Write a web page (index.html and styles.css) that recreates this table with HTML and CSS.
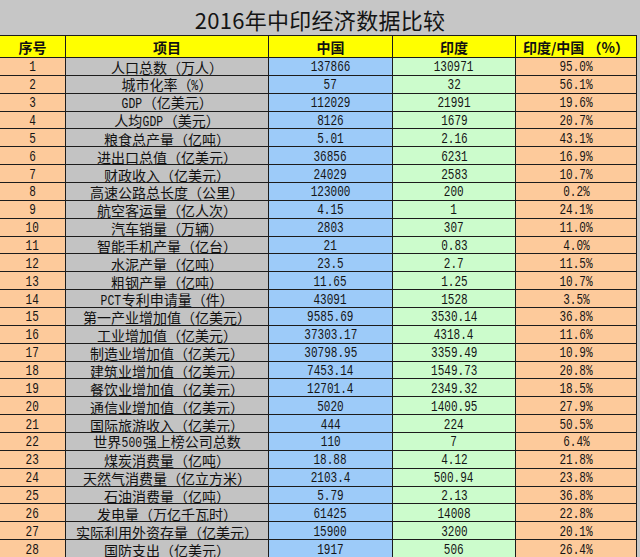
FILE: index.html
```html
<!DOCTYPE html>
<html lang="zh-CN">
<head>
<meta charset="utf-8">
<title>2016年中印经济数据比较</title>
<link rel="stylesheet" href="styles.css">
</head>
<body>
<div class="page">
  <div class="title">2016年中印经济数据比较</div>
  <div class="sheet">
    <div class="hd">序号</div><div class="hd">项目</div><div class="hd">中国</div><div class="hd">印度</div><div class="hd">印度/中国 （%）</div>

    <div class="c1"><span class="num">1</span></div><div class="c2"><span>人口总数（万人）</span></div><div class="c3"><span class="num">137866</span></div><div class="c4"><span class="num">130971</span></div><div class="c5"><span class="num">95.0%</span></div>
    <div class="c1"><span class="num">2</span></div><div class="c2"><span>城市化率（<span class="lat">%</span>）</span></div><div class="c3"><span class="num">57</span></div><div class="c4"><span class="num">32</span></div><div class="c5"><span class="num">56.1%</span></div>
    <div class="c1"><span class="num">3</span></div><div class="c2"><span><span class="lat">GDP</span>（亿美元）</span></div><div class="c3"><span class="num">112029</span></div><div class="c4"><span class="num">21991</span></div><div class="c5"><span class="num">19.6%</span></div>
    <div class="c1"><span class="num">4</span></div><div class="c2"><span>人均<span class="lat">GDP</span>（美元）</span></div><div class="c3"><span class="num">8126</span></div><div class="c4"><span class="num">1679</span></div><div class="c5"><span class="num">20.7%</span></div>
    <div class="c1"><span class="num">5</span></div><div class="c2"><span>粮食总产量（亿吨）</span></div><div class="c3"><span class="num">5.01</span></div><div class="c4"><span class="num">2.16</span></div><div class="c5"><span class="num">43.1%</span></div>
    <div class="c1"><span class="num">6</span></div><div class="c2"><span>进出口总值（亿美元）</span></div><div class="c3"><span class="num">36856</span></div><div class="c4"><span class="num">6231</span></div><div class="c5"><span class="num">16.9%</span></div>
    <div class="c1"><span class="num">7</span></div><div class="c2"><span>财政收入（亿美元）</span></div><div class="c3"><span class="num">24029</span></div><div class="c4"><span class="num">2583</span></div><div class="c5"><span class="num">10.7%</span></div>
    <div class="c1"><span class="num">8</span></div><div class="c2"><span>高速公路总长度（公里）</span></div><div class="c3"><span class="num">123000</span></div><div class="c4"><span class="num">200</span></div><div class="c5"><span class="num">0.2%</span></div>
    <div class="c1"><span class="num">9</span></div><div class="c2"><span>航空客运量（亿人次）</span></div><div class="c3"><span class="num">4.15</span></div><div class="c4"><span class="num">1</span></div><div class="c5"><span class="num">24.1%</span></div>
    <div class="c1"><span class="num">10</span></div><div class="c2"><span>汽车销量（万辆）</span></div><div class="c3"><span class="num">2803</span></div><div class="c4"><span class="num">307</span></div><div class="c5"><span class="num">11.0%</span></div>
    <div class="c1"><span class="num">11</span></div><div class="c2"><span>智能手机产量（亿台）</span></div><div class="c3"><span class="num">21</span></div><div class="c4"><span class="num">0.83</span></div><div class="c5"><span class="num">4.0%</span></div>
    <div class="c1"><span class="num">12</span></div><div class="c2"><span>水泥产量（亿吨）</span></div><div class="c3"><span class="num">23.5</span></div><div class="c4"><span class="num">2.7</span></div><div class="c5"><span class="num">11.5%</span></div>
    <div class="c1"><span class="num">13</span></div><div class="c2"><span>粗钢产量（亿吨）</span></div><div class="c3"><span class="num">11.65</span></div><div class="c4"><span class="num">1.25</span></div><div class="c5"><span class="num">10.7%</span></div>
    <div class="c1"><span class="num">14</span></div><div class="c2"><span><span class="lat">PCT</span>专利申请量（件）</span></div><div class="c3"><span class="num">43091</span></div><div class="c4"><span class="num">1528</span></div><div class="c5"><span class="num">3.5%</span></div>
    <div class="c1"><span class="num">15</span></div><div class="c2"><span>第一产业增加值（亿美元）</span></div><div class="c3"><span class="num">9585.69</span></div><div class="c4"><span class="num">3530.14</span></div><div class="c5"><span class="num">36.8%</span></div>
    <div class="c1"><span class="num">16</span></div><div class="c2"><span>工业增加值（亿美元）</span></div><div class="c3"><span class="num">37303.17</span></div><div class="c4"><span class="num">4318.4</span></div><div class="c5"><span class="num">11.6%</span></div>
    <div class="c1"><span class="num">17</span></div><div class="c2"><span>制造业增加值（亿美元）</span></div><div class="c3"><span class="num">30798.95</span></div><div class="c4"><span class="num">3359.49</span></div><div class="c5"><span class="num">10.9%</span></div>
    <div class="c1"><span class="num">18</span></div><div class="c2"><span>建筑业增加值（亿美元）</span></div><div class="c3"><span class="num">7453.14</span></div><div class="c4"><span class="num">1549.73</span></div><div class="c5"><span class="num">20.8%</span></div>
    <div class="c1"><span class="num">19</span></div><div class="c2"><span>餐饮业增加值（亿美元）</span></div><div class="c3"><span class="num">12701.4</span></div><div class="c4"><span class="num">2349.32</span></div><div class="c5"><span class="num">18.5%</span></div>
    <div class="c1"><span class="num">20</span></div><div class="c2"><span>通信业增加值（亿美元）</span></div><div class="c3"><span class="num">5020</span></div><div class="c4"><span class="num">1400.95</span></div><div class="c5"><span class="num">27.9%</span></div>
    <div class="c1"><span class="num">21</span></div><div class="c2"><span>国际旅游收入（亿美元）</span></div><div class="c3"><span class="num">444</span></div><div class="c4"><span class="num">224</span></div><div class="c5"><span class="num">50.5%</span></div>
    <div class="c1"><span class="num">22</span></div><div class="c2"><span>世界<span class="lat">500</span>强上榜公司总数</span></div><div class="c3"><span class="num">110</span></div><div class="c4"><span class="num">7</span></div><div class="c5"><span class="num">6.4%</span></div>
    <div class="c1"><span class="num">23</span></div><div class="c2"><span>煤炭消费量（亿吨）</span></div><div class="c3"><span class="num">18.88</span></div><div class="c4"><span class="num">4.12</span></div><div class="c5"><span class="num">21.8%</span></div>
    <div class="c1"><span class="num">24</span></div><div class="c2"><span>天然气消费量（亿立方米）</span></div><div class="c3"><span class="num">2103.4</span></div><div class="c4"><span class="num">500.94</span></div><div class="c5"><span class="num">23.8%</span></div>
    <div class="c1"><span class="num">25</span></div><div class="c2"><span>石油消费量（亿吨）</span></div><div class="c3"><span class="num">5.79</span></div><div class="c4"><span class="num">2.13</span></div><div class="c5"><span class="num">36.8%</span></div>
    <div class="c1"><span class="num">26</span></div><div class="c2"><span>发电量（万亿千瓦时）</span></div><div class="c3"><span class="num">61425</span></div><div class="c4"><span class="num">14008</span></div><div class="c5"><span class="num">22.8%</span></div>
    <div class="c1"><span class="num">27</span></div><div class="c2"><span>实际利用外资存量（亿美元）</span></div><div class="c3"><span class="num">15900</span></div><div class="c4"><span class="num">3200</span></div><div class="c5"><span class="num">20.1%</span></div>
    <div class="c1"><span class="num">28</span></div><div class="c2"><span>国防支出（亿美元）</span></div><div class="c3"><span class="num">1917</span></div><div class="c4"><span class="num">506</span></div><div class="c5"><span class="num">26.4%</span></div>
  </div>
</div>
</body>
</html>
```

FILE: styles.css
```css
html, body {
  margin: 0;
  padding: 0;
  background: #c6c6c6;
}

.page {
  width: 640px;
  height: 557px;
  overflow: hidden;
  background: #c6c6c6;
  font-family: "Noto Sans CJK SC", "Noto Sans", sans-serif;
  color: #111;
}

.title {
  height: 35px;
  display: flex;
  align-items: center;
  justify-content: center;
  font-size: 22px;
  line-height: 1;
  padding-top: 2px;
  box-sizing: border-box;
  letter-spacing: 0.3px;
  color: #141414;
}

.sheet {
  width: 637px;
  height: 522px;
  box-sizing: border-box;
  padding: 1px 1px 0 0;
  background: #1c1c1c;
  display: grid;
  grid-template-columns: 65px 202px 123px 122px 120px;
  grid-template-rows: 21px repeat(28, 1fr);
  gap: 1px;
}

.sheet > div {
  display: flex;
  align-items: center;
  justify-content: center;
  font-size: 14px;
  line-height: 14px;
  white-space: nowrap;
  padding-top: 2px;
  box-sizing: border-box;
  min-width: 0;
  min-height: 0;
}

.sheet > .hd {
  background: #ffff00;
  font-weight: 700;
  font-size: 14px;
  padding-top: 1px;
  color: #111;
}

.c1 { background: #fdca9b; }
.c2 { background: #c3c3c3; }
.c3 { background: #9dcbf9; }
.c4 { background: #ccfccc; }
.c5 { background: #fdca9b; }

.num {
  display: inline-block;
  font-family: "Liberation Mono", monospace;
  font-size: 12px;
  line-height: 12px;
  transform: scale(0.92, 1.26);
  color: #151515;
}

.lat {
  display: inline-block;
  font-family: "Liberation Mono", monospace;
  font-size: 12px;
  line-height: 12px;
  transform: scale(0.95, 1.26);
  transform-origin: 50% 80%;
}
```
